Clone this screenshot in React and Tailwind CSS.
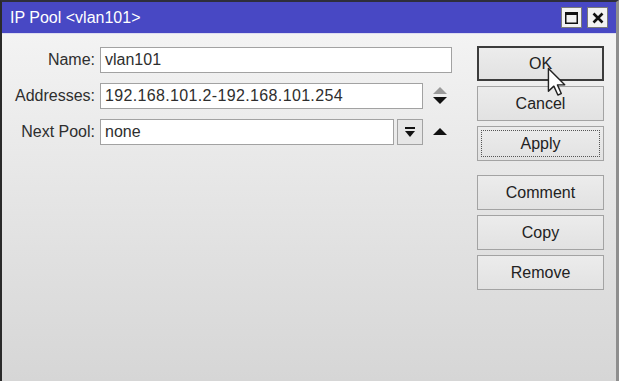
export default function App() {
  const Btn = ({ children, variant }) => (
    <button
      className={
        "relative h-[35px] w-[127px] text-[16px] text-[#222] bg-gradient-to-b from-[#ececec] to-[#e2e2e2] " +
        (variant === "default" ? "border-2 border-[#3c3c3c]" : "border border-[#a3a3a3]")
      }
    >
      {variant === "focus" && (
        <span className="absolute inset-[3px] border border-dotted border-[#555]" />
      )}
      <span className="relative">{children}</span>
    </button>
  );

  return (
    <div className="relative w-[619px] h-[381px] overflow-hidden flex flex-col border-t-2 border-t-[#2e2e3c] border-l-2 border-l-[#2a2a2a] border-r-[3px] border-r-[#8e8e8e] font-['Liberation_Sans',Arial,sans-serif]">
      {/* title bar */}
      <div className="h-[32px] bg-[#4848c4] flex items-center pl-[8px] pr-[8px] border-b border-b-[#dcdcf0]">
        <span className="text-white text-[16px] leading-none">IP Pool &lt;vlan101&gt;</span>
        <div className="ml-auto flex gap-[5px]">
          <div className="w-[21px] h-[21px] bg-[#f2f2f2] border border-[#7a7a7a] flex items-center justify-center">
            <svg width="13" height="12" viewBox="0 0 13 12">
              <rect x="0.75" y="0.75" width="11.5" height="10.5" fill="none" stroke="#111" strokeWidth="1.5" />
              <rect x="0" y="0" width="13" height="3" fill="#111" />
            </svg>
          </div>
          <div className="w-[21px] h-[21px] bg-[#f2f2f2] border border-[#7a7a7a] flex items-center justify-center">
            <svg width="12" height="12" viewBox="0 0 12 12">
              <path d="M1.5 1.5 L10.5 10.5 M10.5 1.5 L1.5 10.5" stroke="#111" strokeWidth="2.6" />
            </svg>
          </div>
        </div>
      </div>

      {/* body */}
      <div className="flex-1 flex bg-gradient-to-b from-[#f3f3f3] to-[#d6d6d6] pt-[12px]">
        <div className="flex flex-col gap-[10px] pt-[1px] text-[16px] text-[#2e2e2e]">
          <div className="flex items-center h-[26px]">
            <span className="w-[93px] text-right">Name:</span>
            <div className="ml-[5px] w-[352px] h-[26px] bg-white border border-[#a2a2a2] flex items-center pl-[4px]">vlan101</div>
          </div>
          <div className="flex items-center h-[26px]">
            <span className="w-[93px] text-right">Addresses:</span>
            <div className="ml-[5px] w-[323px] h-[26px] bg-white border border-[#a2a2a2] flex items-center pl-[4px] tracking-[0.35px]">192.168.101.2-192.168.101.254</div>
            <svg className="ml-[9px]" width="16" height="20" viewBox="0 0 16 20">
              <path d="M8 1 L15 8 L1 8 Z" fill="#9a9a9a" />
              <path d="M1 11 L15 11 L8 18 Z" fill="#111" />
            </svg>
          </div>
          <div className="flex items-center h-[26px]">
            <span className="w-[93px] text-right">Next Pool:</span>
            <div className="ml-[5px] w-[294px] h-[26px] bg-white border border-[#a2a2a2] flex items-center pl-[4px]">none</div>
            <div className="ml-[3px] w-[26px] h-[26px] bg-[#e6e6e6] border border-[#a2a2a2] flex items-center justify-center">
              <svg width="12" height="12" viewBox="0 0 12 12">
                <rect x="1" y="1" width="10" height="2" fill="#111" />
                <path d="M1 5 L11 5 L6 11 Z" fill="#111" />
              </svg>
            </div>
            <svg className="ml-[9px]" width="16" height="10" viewBox="0 0 16 10">
              <path d="M8 1 L15 8 L1 8 Z" fill="#111" />
            </svg>
          </div>
        </div>

        <div className="ml-auto mr-[12px] flex flex-col">
          <div className="flex flex-col gap-[5px]">
            <Btn variant="default">OK</Btn>
            <Btn>Cancel</Btn>
            <Btn variant="focus">Apply</Btn>
          </div>
          <div className="flex flex-col gap-[5px] mt-[14px]">
            <Btn>Comment</Btn>
            <Btn>Copy</Btn>
            <Btn>Remove</Btn>
          </div>
        </div>
      </div>

      {/* mouse cursor */}
      <svg className="absolute left-[545px] top-[65px]" width="20" height="30" viewBox="0 0 14 21">
        <path d="M1 1 L1 17 L4.8 13.4 L7.6 19.6 L10 18.6 L7.3 12.5 L12.4 12.5 Z" fill="#fff" stroke="#222" strokeWidth="1" strokeLinejoin="round" />
      </svg>
    </div>
  );
}
